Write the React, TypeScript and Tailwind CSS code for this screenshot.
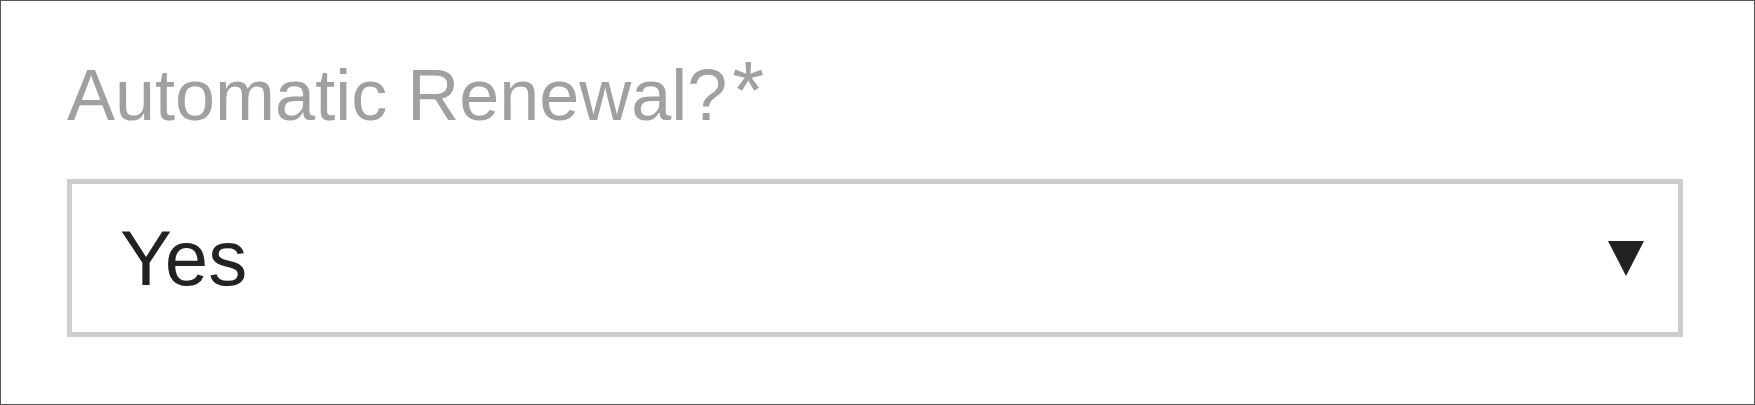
export default function App() {
  return (
    <div className="h-[405px] w-[1755px] border border-[#555555] bg-white font-['Liberation_Sans',Arial,sans-serif]">
      <div className="ml-[66px] mt-[58px] flex items-start text-[72px] leading-none text-[#a0a0a0]">
        <span>Automatic Renewal?</span>
        <span className="-mt-[10px] ml-[5px] text-[82px] leading-none">*</span>
      </div>

      <div className="ml-[66px] mt-[48px] flex h-[158px] w-[1616px] items-center justify-between border-[5px] border-[#cdcdcd] pl-[48px] pr-[34px]">
        <span className="text-[78px] leading-none text-[#222222]">Yes</span>
        <svg width="36" height="35" viewBox="0 0 36 35" className="shrink-0">
          <polygon points="0,0 36,0 18,35" fill="#222222" />
        </svg>
      </div>
    </div>
  );
}
